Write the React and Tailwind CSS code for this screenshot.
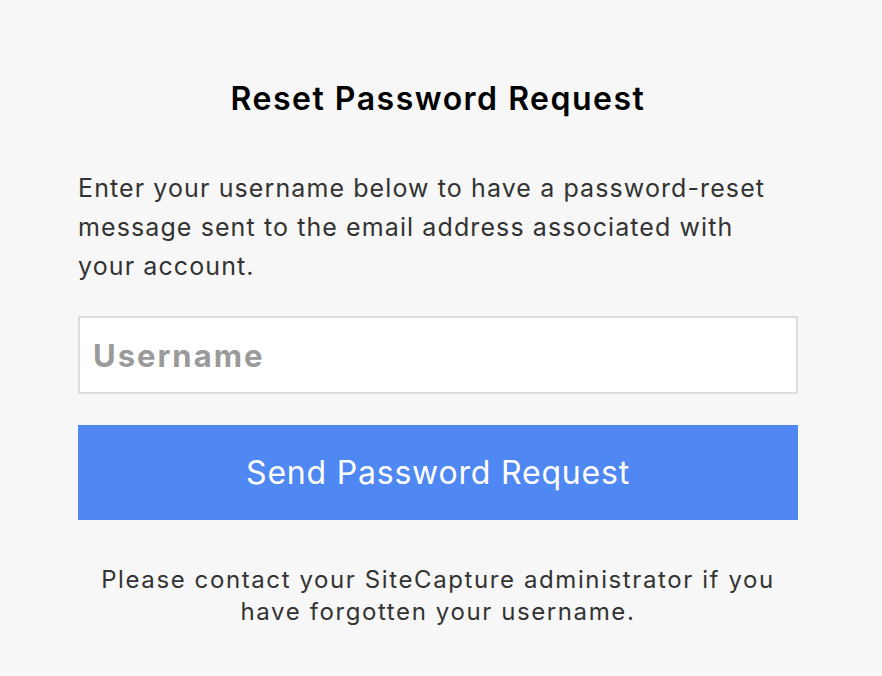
import React from 'react';

export default function App() {
  return (
    <div className="min-h-[676px] w-full bg-[#f7f7f7] font-['Inter',sans-serif]">
      <div className="ml-[78px] w-[720px] pt-[79px]">
        {/* Title */}
        <h1 className="text-center text-[32px] font-semibold leading-[40px] text-black tracking-[1.5px]">
          Reset Password Request
        </h1>

        <p className="mt-[50px] w-[700px] text-[25px] leading-[39px] text-[#333] tracking-[1.1px]">
          Enter your username below to have a password-reset message sent to the email address associated with your account.
        </p>

        <input
          type="text"
          placeholder="Username"
          className="mt-[30px] block h-[78px] w-full border-2 border-[#dddddd] bg-white px-[13px] text-[31px] font-bold tracking-[2px] text-[#333] placeholder:text-[#9a9a9a] outline-none"
        />

        <button className="mt-[31px] flex h-[95px] w-full items-center justify-center bg-[#4f88f3] text-[32px] tracking-[0.8px] text-white">
          Send Password Request
        </button>

        <p className="mt-[44px] px-[10px] text-center text-[24px] leading-[32px] tracking-[1.6px] text-[#333]">
          Please contact your SiteCapture administrator if you have forgotten your username.
        </p>
      </div>
    </div>
  );
}
